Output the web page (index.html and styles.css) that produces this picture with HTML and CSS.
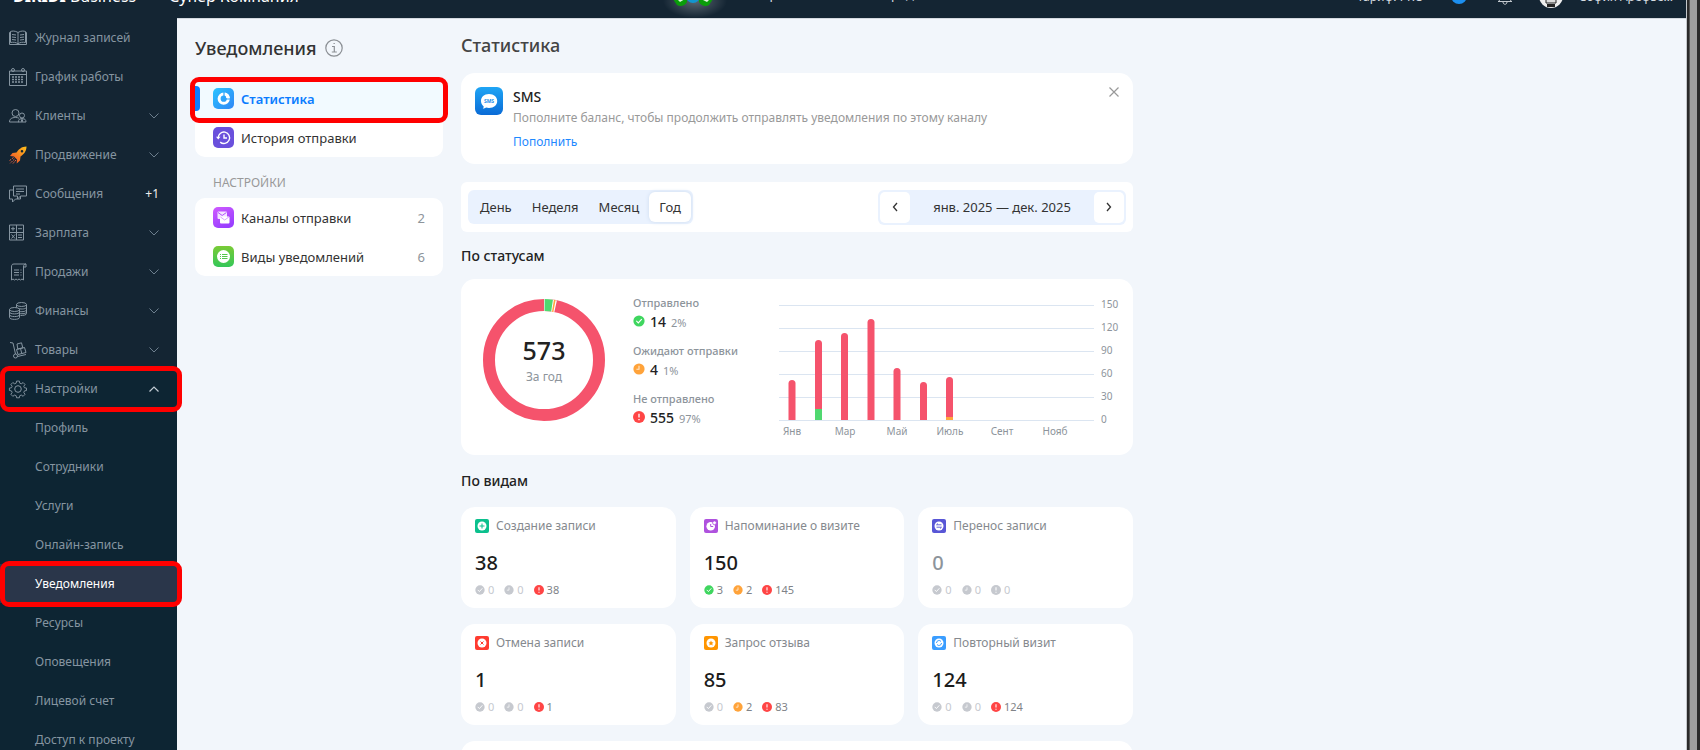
FILE: index.html
```html
<!DOCTYPE html>
<html lang="ru">
<head>
<meta charset="utf-8">
<title>Уведомления — Статистика</title>
<link rel="stylesheet" href="styles.css">
</head>
<body>
<svg class="sprite" aria-hidden="true">
  <symbol id="ok" viewBox="0 0 12 12"><circle cx="6" cy="6" r="5.6" fill="currentColor"/><path d="M3.6 6.2l1.7 1.7 3.2-3.6" fill="none" stroke="#fff" stroke-width="1.1" stroke-linecap="round"/></symbol>
  <symbol id="wait" viewBox="0 0 12 12"><circle cx="6" cy="6" r="5.6" fill="currentColor"/><path d="M6 2.8v3.4H3.4" fill="none" stroke="#fff" stroke-opacity=".75" stroke-width="1.1"/></symbol>
  <symbol id="fail" viewBox="0 0 12 12"><circle cx="6" cy="6" r="6" fill="currentColor"/><path d="M6 2.8v3.8M6 8v1.3" fill="none" stroke="#fff" stroke-width="1.3"/></symbol>
  <symbol id="down" viewBox="0 0 10 6"><path d="M.5.5L5 5 9.5.5" fill="none" stroke="currentColor"/></symbol>
  <symbol id="up" viewBox="0 0 10 6"><path d="M.5 5.5L5 1l4.500 4.500" fill="none" stroke="currentColor" stroke-width="1.2"/></symbol>
</svg>
<div class="frame">
<div class="app">
  <header class="topbar">
    <span class="logo"><b>DIKIDI</b> Business</span>
    <span class="company">Супер Компания</span>
    <span class="promo">
      <svg class="promo-icon" viewBox="0 0 80 44"><defs><radialGradient id="glow"><stop offset="0" stop-color="#fff" stop-opacity=".3"/><stop offset="1" stop-color="#fff" stop-opacity="0"/></radialGradient></defs><ellipse cx="37" cy="27" rx="32" ry="17" fill="url(#glow)"/><path d="M13 22l6 9c3 2 8 1 10-3V18H15zM57 22l-6 9c-3 2-8 1-10-3V18h14z" fill="#0a9d0a"/><path d="M18 24l4 4 5-3M53 24l-4 4-4-2" fill="#dff3df"/><ellipse cx="35" cy="22" rx="7" ry="7" fill="#1296cf"/></svg>
      <span class="promo-text">Приложение без очереди</span>
    </span>
    <span class="account">
      <span class="tariff">Тариф: PRO</span>
      <span class="dot"></span>
      <svg class="bell" viewBox="0 0 16 20"><path d="M1 15.500h14M2 15c2-2 1-6 2-9 1-2 2-3 4-3s3 1 4 3c1 3 0 7 2 9M6 16c0 3 4 3 4 0" fill="none" stroke="#c3c9cf"/></svg>
      <svg class="avatar" viewBox="0 0 24 24"><circle cx="12" cy="12" r="12" fill="#eee"/><path d="M7 8h10v11H7z" fill="#ddd" stroke="#222"/><path d="M8 20h8v3H8z" fill="#222"/></svg>
      <span>София Арефье…</span>
    </span>
  </header>
  <div class="body">
    <nav class="sidebar">
      <a class="row" href="#"><svg class="ico" viewBox="0 0 18 18"><path d="M9 3.500C6 1.500 3 2 1.500 2.500v11C4 13 7 13 9 15c2-2 5-2 7.500-1.500v-11C15 2 12 1.500 9 3.500v11.500M1.500 3.500h-1v12h17v-12h-1M3 5.500l4 .5M3 8l4 .5M3 10.500l4 .5M15 5.500l-4 .5M15 8l-4 .5M15 10.500l-4 .5"/></svg>Журнал записей</a>
      <a class="row" href="#"><svg class="ico" viewBox="0 0 18 18"><path d="M.5 3h17v14.500H.5zM.5 6.500h17"/><circle cx="4" cy="2" r="1.500"/><circle cx="14" cy="2" r="1.500"/><path d="M3 9h12M3 11.500h12M3 14h12" stroke-dasharray="2 1" stroke-width="1.500"/></svg>График работы</a>
      <a class="row" href="#"><svg class="ico" viewBox="0 0 18 18"><circle cx="6.500" cy="6" r="3.500"/><path d="M.5 15c0-3 2-4.500 6-4.500 1.500 0 2.500.2 3.500.7M.5 15H10"/><circle cx="13" cy="8.500" r="2.500"/><path d="M9.500 15c0-2.500 1-3.500 3.500-3.500s4 1 4 3.500zM12 12l1 3 1-3"/></svg>Клиенты<svg class="chev"><use href="#down"/></svg></a>
      <a class="row" href="#"><svg class="ico rocket" viewBox="0 0 18 18"><defs><linearGradient id="rk" x1="1" y1="0" x2="0" y2="1"><stop offset="0" stop-color="#ffc21a"/><stop offset="1" stop-color="#f0442c"/></linearGradient></defs><path d="M17.500.5c-5 0-8 3-10 6L3.500 7 1 10l4 .5 3 3-.3 4L11 14.500l.5-4c3-2 6-5 6-10zM13 4a1.300 1.300 0 1 1 0 2.600A1.300 1.300 0 0 1 13 4z" fill="url(#rk)"/><path d="M4.500 11.500L0 15M5.500 13L1 17.500M7 14l-3 3.500" stroke="#f0643c" stroke-dasharray="2 1"/></svg>Продвижение<svg class="chev"><use href="#down"/></svg></a>
      <a class="row" href="#"><svg class="ico" viewBox="0 0 18 18"><path d="M4.500 1h13v10h-6l-3 3v-3h-4zM7 4h8M7 6.500h8M7 9h4M4.500 5H.5v9h3v3l3-3h5v-3"/></svg>Сообщения<span class="count">+1</span></a>
      <a class="row" href="#"><svg class="ico" viewBox="0 0 18 18"><path d="M.5 1h14v15H.5zM7.500 1v15M.5 8.500h14M2 4.700h4M4 2.700v4M9 4.700h4M2.500 10.500l3.500 4M6 10.500l-3.500 4M9 11h4M9 13.500h4"/></svg>Зарплата<svg class="chev"><use href="#down"/></svg></a>
      <a class="row" href="#"><svg class="ico" viewBox="0 0 18 18"><path d="M17 1H5C3 1 2.500 2 2.500 4v13l1.500-1 1.500 1L7 16l1.500 1 1.500-1 1.500 1 1.500-1 1.500 1V4c0-2 1-3 2.500-3v3h-2.500M5 7h5M5 9.500h5M5 12h5M11.500 7h1M11.500 9.500h1M11.500 12h1"/></svg>Продажи<svg class="chev"><use href="#down"/></svg></a>
      <a class="row" href="#"><svg class="ico" viewBox="0 0 18 18"><ellipse cx="5.500" cy="7.500" rx="5" ry="2"/><path d="M.5 7.500v8c0 2.500 10 2.500 10 0v-8M.5 10c0 2.500 10 2.500 10 0M.5 12.700c0 2.500 10 2.500 10 0"/><ellipse cx="12.500" cy="2.500" rx="5" ry="2"/><path d="M7.500 2.500v3M17.500 2.500v9c0 1.500-3 2-6 2M17.500 5c0 2-5 2.500-8 1.500M17.500 7.500c0 2-4 2.500-7 2M17.500 10c0 1.500-4 2-7 1.500"/></svg>Финансы<svg class="chev"><use href="#down"/></svg></a>
      <a class="row" href="#"><svg class="ico" viewBox="0 0 18 18"><path d="M1 1.500l3 .5 2.500 11M17 13.500l-8.500 2"/><circle cx="6.500" cy="15" r="2"/><path d="M7.500 8.500l8-2 1.500 5-8 2zM11.500 7.500l1.300 5M8 3l4.500-1.200 1.300 5-5 1.200z"/></svg>Товары<svg class="chev"><use href="#down"/></svg></a>
      <div class="group">
        <a class="row marked" href="#"><svg class="ico" viewBox="0 0 18 18"><circle cx="9" cy="9" r="3.300"/><path d="M7.500.6h3l.4 2.200 1.600.7 2-1.300 2 2-1.300 2 .7 1.500 2.200.4v2.500l-2.200.5-.7 1.600 1.300 2-2 2.100-2-1.300-1.600.7-.4 2.200h-3l-.4-2.200-1.600-.7-2 1.300-2-2.100 1.300-2-.7-1.600L-.1 10.600V8.100l2.200-.4.700-1.500-1.300-2 2-2 2 1.300 1.600-.7z" transform="translate(.5 .5) scale(.94)"/></svg>Настройки<svg class="chev open"><use href="#up"/></svg></a>
        <a class="row sub" href="#">Профиль</a>
        <a class="row sub" href="#">Сотрудники</a>
        <a class="row sub" href="#">Услуги</a>
        <a class="row sub" href="#">Онлайн-запись</a>
        <a class="row sub current marked" href="#">Уведомления</a>
        <a class="row sub" href="#">Ресурсы</a>
        <a class="row sub" href="#">Оповещения</a>
        <a class="row sub" href="#">Лицевой счет</a>
        <a class="row sub" href="#">Доступ к проекту</a>
      </div>
    </nav>

    <aside class="section-nav">
      <h1>Уведомления <svg class="info" viewBox="0 0 18 18"><circle cx="9" cy="9" r="8.200"/><path d="M7 7.500h2.300v5.300M6.800 13h5M8.500 4.500h1.300"/></svg></h1>
      <div class="menu">
        <a class="item selected" href="#"><svg class="tile" viewBox="0 0 21 21"><defs><linearGradient id="g1" x2="1" y2="1"><stop stop-color="#2bc4ff"/><stop offset="1" stop-color="#2f86f6"/></linearGradient></defs><rect width="21" height="21" rx="5" fill="url(#g1)"/><circle cx="10.700" cy="10.700" r="4.600" fill="none" stroke="#fff" stroke-width="3"/><path d="M11 4v7h6" fill="none" stroke="#2ba4fb" stroke-width="1.200"/><path d="M11.800 4.400a6 6 0 0 1 5 5.500h-3.500z" fill="#fff"/></svg>Статистика</a>
        <a class="item" href="#"><svg class="tile" viewBox="0 0 21 21"><rect width="21" height="21" rx="5" fill="#6a50dc"/><path d="M5.200 11a5.700 5.700 0 1 1 2 4.100M11 7.500V11h3" fill="none" stroke="#fff" stroke-width="1.400"/><path d="M3 9.700h4.500L5.200 12.600z" fill="#fff"/></svg>История отправки</a>
      </div>
      <h2 class="caption">НАСТРОЙКИ</h2>
      <div class="menu">
        <a class="item" href="#"><svg class="tile" viewBox="0 0 21 21"><defs><linearGradient id="g2" y2="1" x2=".5"><stop stop-color="#cf5bff"/><stop offset="1" stop-color="#9a3fff"/></linearGradient></defs><rect width="21" height="21" rx="5" fill="url(#g2)"/><rect x="4.500" y="4.500" width="9.500" height="7.500" rx="1" fill="#fff" opacity=".85"/><path d="M5 5.500l4.200 3 4.200-3" fill="none" stroke="#b24fff"/><rect x="7" y="9.500" width="9.500" height="7" rx="1" fill="#fff"/><path d="M7.500 10l4.200 3 4.200-3" fill="none" stroke="#d9a6ff"/></svg>Каналы отправки<span class="qty">2</span></a>
        <a class="item" href="#"><svg class="tile" viewBox="0 0 21 21"><defs><linearGradient id="g3" x2="0" y2="1"><stop stop-color="#7acb36"/><stop offset="1" stop-color="#34c759"/></linearGradient></defs><rect width="21" height="21" rx="5" fill="url(#g3)"/><circle cx="10.500" cy="10.500" r="6.500" fill="#fff"/><path d="M7 8.500h1M9 8.500h5.500M7 10.500h1M9 10.500h5.500M7 12.500h1M9 12.500h5.500" stroke="#55c84a"/></svg>Виды уведомлений<span class="qty">6</span></a>
      </div>
    </aside>

    <main class="content">
      <h1 class="page-title">Статистика</h1>
      <section class="card notice">
        <svg class="sms" viewBox="0 0 28 28"><defs><linearGradient id="g4" x2="0" y2="1"><stop stop-color="#1fa5f5"/><stop offset="1" stop-color="#0a6bd6"/></linearGradient></defs><rect width="28" height="28" rx="6" fill="url(#g4)"/><path d="M14 7c5 0 8.200 3 8.200 7S19 21 14 21c-1 0-2-.1-3-.4-.8.6-2 1-3.300 1 .7-.7 1-1.400 1-2.200C7 18 6 16.200 6 14c0-4 3-7 8-7z" fill="#fff"/><text x="14" y="16" text-anchor="middle" class="sms-text">SMS</text></svg>
        <div class="notice-text">
          <h3>SMS</h3>
          <p>Пополните баланс, чтобы продолжить отправлять уведомления по этому каналу</p>
          <a href="#">Пополнить</a>
        </div>
        <button class="close" aria-label="Закрыть"><svg viewBox="0 0 10 10"><path d="M.5.5l9 9M9.500.5l-9 9" stroke="#999" fill="none" stroke-width="1.200"/></svg></button>
      </section>

      <section class="toolbar">
        <div class="segments">
          <button>День</button><button>Неделя</button><button>Месяц</button><button class="on">Год</button>
        </div>
        <div class="range">
          <button aria-label="Назад"><svg viewBox="0 0 6 10"><path d="M5 1L1.500 5 5 9"/></svg></button>
          <span>янв. 2025 — дек. 2025</span>
          <button aria-label="Вперёд"><svg viewBox="0 0 6 10"><path d="M1 1l3.500 4L1 9"/></svg></button>
        </div>
      </section>

      <h2>По статусам</h2>
      <section class="card status">
        <div class="donut">
          <svg viewBox="0 0 122 122"><g fill="none" stroke-width="12" transform="rotate(-90 61 61)"><circle cx="61" cy="61" r="55" stroke="#f5536c"/><circle cx="61" cy="61" r="55" stroke="#fff" pathLength="573" stroke-dasharray="19.500 553.500"/><circle cx="61" cy="61" r="55" stroke="#50d870" pathLength="573" stroke-dasharray="0 1 12.500 559.500"/><circle cx="61" cy="61" r="55" stroke="#ffa63d" pathLength="573" stroke-dasharray="0 15 2.500 555.500"/></g></svg>
          <div class="donut-label"><strong>573</strong><span>За год</span></div>
        </div>
        <dl class="legend">
          <div><dt>Отправлено</dt><dd><svg class="green"><use href="#ok"/></svg><b>14</b><small>2%</small></dd></div>
          <div><dt>Ожидают отправки</dt><dd><svg class="orange"><use href="#wait"/></svg><b>4</b><small>1%</small></dd></div>
          <div><dt>Не отправлено</dt><dd><svg class="red"><use href="#fail"/></svg><b>555</b><small>97%</small></dd></div>
        </dl>
        <svg class="chart" viewBox="0 0 344 144">
          <path d="M0 13.500h315M0 36.500h315M0 59.500h315M0 82.500h315M0 105.500h315M0 128.500h315" stroke="#dbe5f1"/>
          <g fill="#f5536c">
            <path d="M9.500 128V91.500a3.500 3.500 0 0 1 7 0V128z"/>
            <path d="M36 128V51.500a3.500 3.500 0 0 1 7 0V128z"/>
            <path d="M62 128V44.500a3.500 3.500 0 0 1 7 0V128z"/>
            <path d="M88.500 128V30.500a3.500 3.500 0 0 1 7 0V128z"/>
            <path d="M114.500 128V79.500a3.500 3.500 0 0 1 7 0V128z"/>
            <path d="M141 128V93.500a3.500 3.500 0 0 1 7 0V128z"/>
            <path d="M167 128V88.500a3.500 3.500 0 0 1 7 0V128z"/>
          </g>
          <path d="M36 117h7v11h-7z" fill="#50d870"/><path d="M167 125h7v3h-7z" fill="#ffa63d"/>
          <g class="axis">
            <text x="322" y="16">150</text><text x="322" y="39">120</text><text x="322" y="62">90</text><text x="322" y="85">60</text><text x="322" y="108">30</text><text x="322" y="131">0</text>
            <g text-anchor="middle"><text x="13" y="143">Янв</text><text x="66" y="143">Мар</text><text x="118" y="143">Май</text><text x="171" y="143">Июль</text><text x="223" y="143">Сент</text><text x="276" y="143">Нояб</text></g>
          </g>
        </svg>
      </section>

      <h2>По видам</h2>
      <div class="kinds">
        <article class="card kind"><h3><svg viewBox="0 0 14 14"><rect width="14" height="14" rx="2" fill="#0bc08d"/><circle cx="7" cy="7" r="4.500" fill="#fff"/><path d="M7 4.500v5M4.500 7h5" stroke="#0bc08d"/></svg>Создание записи</h3><strong>38</strong><ul><li><svg><use href="#ok"/></svg>0</li><li><svg><use href="#wait"/></svg>0</li><li class="has"><svg class="red"><use href="#fail"/></svg>38</li></ul></article>
        <article class="card kind"><h3><svg viewBox="0 0 14 14"><rect width="14" height="14" rx="2" fill="#af52de"/><circle cx="6.700" cy="7.300" r="4.300" fill="#fff"/><path d="M6.700 5v2.500h2.500" stroke="#af52de" fill="none"/><circle cx="10.500" cy="3.800" r="1.900" fill="#fff" stroke="#af52de" stroke-width=".8"/></svg>Напоминание о визите</h3><strong>150</strong><ul><li class="has"><svg class="green"><use href="#ok"/></svg>3</li><li class="has"><svg class="orange"><use href="#wait"/></svg>2</li><li class="has"><svg class="red"><use href="#fail"/></svg>145</li></ul></article>
        <article class="card kind"><h3><svg viewBox="0 0 14 14"><rect width="14" height="14" rx="2" fill="#5856d6"/><circle cx="7" cy="7" r="4.500" fill="#fff"/><path d="M9.500 5.800h-5l1.500-1.300M4.500 8.200h5L8 9.500" stroke="#5856d6" stroke-width=".9" fill="none"/></svg>Перенос записи</h3><strong class="zero">0</strong><ul><li><svg><use href="#ok"/></svg>0</li><li><svg><use href="#wait"/></svg>0</li><li><svg><use href="#fail"/></svg>0</li></ul></article>
        <article class="card kind"><h3><svg viewBox="0 0 14 14"><rect width="14" height="14" rx="2" fill="#ff3b30"/><circle cx="7" cy="7" r="4.500" fill="#fff"/><path d="M5.500 5.500l3 3M8.500 5.500l-3 3" stroke="#ff3b30"/></svg>Отмена записи</h3><strong>1</strong><ul><li><svg><use href="#ok"/></svg>0</li><li><svg><use href="#wait"/></svg>0</li><li class="has"><svg class="red"><use href="#fail"/></svg>1</li></ul></article>
        <article class="card kind"><h3><svg viewBox="0 0 14 14"><rect width="14" height="14" rx="2" fill="#ff9500"/><circle cx="7" cy="7" r="4.500" fill="#fff"/><path d="M7 4.500l.8 1.700 1.800.2-1.300 1.200.3 1.800L7 8.500l-1.600.9.300-1.800-1.300-1.200 1.800-.2z" fill="#ff9500"/></svg>Запрос отзыва</h3><strong>85</strong><ul><li><svg><use href="#ok"/></svg>0</li><li class="has"><svg class="orange"><use href="#wait"/></svg>2</li><li class="has"><svg class="red"><use href="#fail"/></svg>83</li></ul></article>
        <article class="card kind"><h3><svg viewBox="0 0 14 14"><rect width="14" height="14" rx="2" fill="#3a9dff"/><circle cx="7" cy="7" r="4.500" fill="#fff"/><path d="M4.500 7a2.500 2.500 0 0 1 4.500-1.500M9.500 7A2.500 2.500 0 0 1 5 8.500" stroke="#3a9dff" fill="none"/></svg>Повторный визит</h3><strong>124</strong><ul><li><svg><use href="#ok"/></svg>0</li><li><svg><use href="#wait"/></svg>0</li><li class="has"><svg class="red"><use href="#fail"/></svg>124</li></ul></article>
        <article class="card kind wide"></article>
      </div>
    </main>
  </div>
</div>
<div class="scrollbar"><div class="thumb"></div></div>
</div>
</body>
</html>
```
FILE: styles.css
```css
* { box-sizing: border-box; margin: 0; padding: 0; }
body { height: 100vh; overflow: hidden; font-family: "Noto Sans", "Open Sans", sans-serif; font-size: 13px; color: #333; background: #f2f6fb; }
a { color: inherit; text-decoration: none; }
button { font: inherit; color: inherit; border: 0; background: none; }
svg { display: block; flex: none; }
.sprite { position: absolute; width: 0; height: 0; }

.frame { display: flex; height: 100vh; }
.app { flex: 1; min-width: 0; overflow: hidden; border-right: 1px solid #c4c7cb; }
.scrollbar { width: 13px; padding: 0 3px 0 2px; background: #2a2a2a; }
.thumb { height: 100%; background: #9e9e9e; border-left: 1px solid #555; }

.topbar { display: flex; align-items: center; height: 44px; margin-top: -26px; padding: 0 13px; background: #142533; color: #d5dbe0; white-space: nowrap; }
.logo { width: 156px; font-size: 16px; color: #fff; }
.company { width: 489px; font-size: 16px; color: #fff; }
.promo { display: flex; align-items: center; gap: 22px; font-size: 13px; }
.promo-icon { width: 80px; height: 44px; }
.promo-text { padding-bottom: 5px; }
.account { display: flex; align-items: center; gap: 16px; margin-left: auto; font-size: 12px; }
.dot { width: 16px; height: 16px; margin-left: 11px; border-radius: 50%; background: #1c8ff0; }
.bell { width: 16px; height: 20px; margin: 0 10px 0 14px; }
.avatar { width: 24px; height: 24px; }

.body { display: flex; border-top: 1px solid #d3d9df; }
.sidebar { width: 177px; flex: none; margin-top: -1px; background: #142533; color: #8695a1; font-size: 12px; }
.row { display: flex; align-items: center; gap: 8px; height: 39px; padding: 0 18px 0 9px; white-space: nowrap; }
.ico { width: 18px; height: 18px; fill: none; stroke: #8695a1; stroke-width: 1; overflow: visible; }
.rocket { stroke: none; }
.chev { width: 10px; height: 6px; margin-left: auto; color: #6d7f8e; }
.chev.open { color: #c3ccd4; }
.count { margin-left: auto; color: #eee; }
.group { background: #0d2533; }
.row.sub { padding-left: 35px; }
.row.current { background: #2a364a; color: #fff; }
.marked, .selected { position: relative; }
.marked::after, .selected::after { content: ""; position: absolute; z-index: 2; border: 5px solid #f00; border-radius: 9px; }
.marked::after { inset: -3px -5px -4px 0; }
.selected::after { inset: -2px -5px -5px; }

.section-nav { width: 248px; margin: 0 18px; flex: none; padding-top: 13px; }
.section-nav h1 { display: flex; align-items: center; gap: 8px; height: 32px; margin-bottom: 15px; font-size: 18px; font-weight: 500; }
.info { width: 18px; height: 18px; fill: none; stroke: #8b8f94; stroke-width: 1.200; }
.menu { border-radius: 10px; background: #fff; }
.item { display: flex; align-items: center; gap: 7px; height: 39px; padding: 0 18px; font-size: 13px; }
.tile { width: 21px; height: 21px; }
.qty { margin-left: auto; color: #8d949b; }
.item.selected { background: #f2faff; color: #0a7cff; font-weight: 600; }
.item.selected::before { content: ""; position: absolute; left: 0; width: 5px; height: 25px; border-radius: 0 4px 4px 0; background: #0a7cff; }
.caption { margin: 17px 18px 7px; font-size: 12px; line-height: 17px; font-weight: 400; color: #999; }

.content { flex: 0 1 672px; padding-top: 11px; }
.page-title { margin-bottom: 13px; font-size: 18px; line-height: 30px; font-weight: 500; color: #444; }
.content h2 { font-size: 14px; line-height: 20px; font-weight: 500; color: #222; }
.card { border-radius: 14px; background: #fff; }
.notice { display: flex; align-items: flex-start; gap: 10px; padding: 14px 14px 13px; margin-bottom: 18px; }
.sms { width: 28px; height: 28px; }
.sms-text { font-size: 5px; font-weight: 700; fill: #2490ea; }
.notice-text { flex: 1; }
.notice-text h3 { font-size: 14px; line-height: 20px; font-weight: 500; color: #222; }
.notice-text p { margin: 2px 0 6px; font-size: 12px; line-height: 18px; color: #999; }
.notice-text a { display: block; font-size: 12px; line-height: 18px; color: #1e88ff; }
.close { width: 10px; height: 10px; }
.close svg { width: 10px; height: 10px; }

.toolbar { display: flex; justify-content: space-between; align-items: center; height: 50px; padding: 0 7px; margin-bottom: 14px; border-radius: 6px; background: #fff; }
.segments { display: flex; padding: 2px; border-radius: 6px; background: #eaf2fe; }
.segments button { height: 30px; padding: 0 10px; border-radius: 6px; }
.segments .on { background: #fff; box-shadow: 0 0 4px #cddcf0; }
.range { display: flex; align-items: center; width: 248px; padding: 2px; border-radius: 6px; background: #eaf2fe; }
.range span { flex: 1; text-align: center; font-size: 13px; }
.range button { display: grid; place-items: center; width: 30px; height: 31px; border-radius: 5px; background: #fff; }
.range svg { width: 6px; height: 10px; fill: none; stroke: #333; stroke-width: 1.300; }

.status { display: flex; align-items: flex-start; height: 176px; margin: 13px 0 16px; padding: 13px 10px 0 22px; }
.donut { display: grid; width: 122px; margin: 7px 28px 0 0; }
.donut > * { grid-area: 1 / 1; }
.donut svg { width: 122px; height: 122px; }
.donut-label { display: flex; flex-direction: column; align-items: center; padding-top: 34px; }
.donut-label strong { font-size: 25px; line-height: 34px; font-weight: 500; color: #222; }
.donut-label span { font-size: 12px; line-height: 20px; color: #8d949b; }
.legend { display: flex; flex-direction: column; gap: 12px; flex: 1; margin-top: 3px; }
.legend dt { font-size: 11px; line-height: 16px; font-weight: 500; color: #8d949b; }
.legend dd { display: flex; align-items: center; height: 20px; }
.legend svg { width: 12px; height: 12px; margin-right: 5px; }
.legend b { margin-right: 5px; font-size: 14px; font-weight: 500; color: #222; }
.legend small { font-size: 11px; padding-top: 2px; color: #8d949b; }
.legend .green, .green { color: #3fd65f; }
.orange { color: #ffa33a; }
.red { color: #ff4545; }
.chart { width: 344px; height: 144px; overflow: visible; }
.axis { font-size: 10px; fill: #8d949b; }

.kinds { display: grid; grid-template-columns: repeat(3, 1fr); gap: 16px 14px; margin-top: 16px; }
.kind { height: 101px; padding: 10px 14px; }
.wide { grid-column: 1 / -1; }
.kind h3 { display: flex; align-items: center; gap: 7px; font-size: 12px; line-height: 18px; font-weight: 400; color: #85898e; white-space: nowrap; }
.kind h3 svg { width: 14px; height: 14px; }
.kind strong { display: block; margin: 14px 0 5px; font-size: 20px; line-height: 28px; font-weight: 500; color: #1c1c1c; }
.kind strong.zero { color: #8d949b; }
.kind ul { display: flex; gap: 10px; list-style: none; font-size: 11px; line-height: 16px; color: #c6c9cf; }
.kind li { display: flex; align-items: center; gap: 3px; }
.kind li.has { color: #808388; }
.kind li svg { width: 10px; height: 10px; }
```
